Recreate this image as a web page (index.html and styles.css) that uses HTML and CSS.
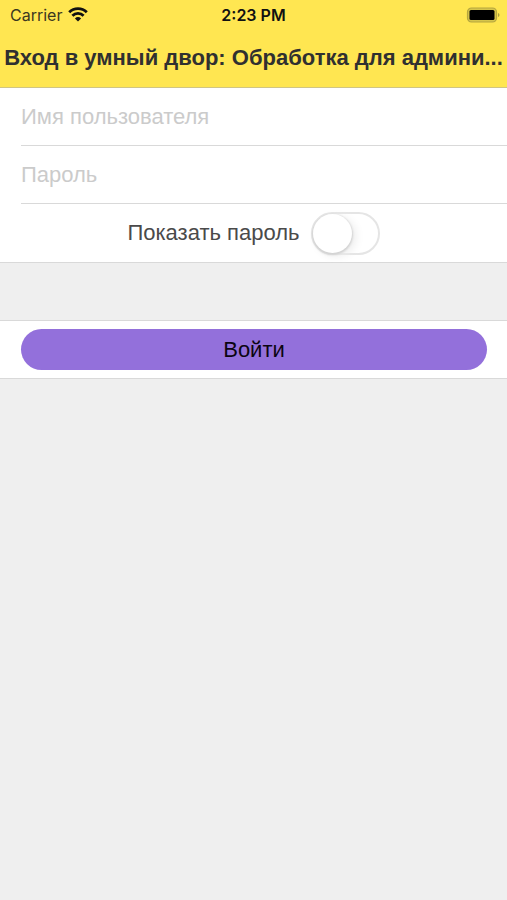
FILE: index.html
```html
<!DOCTYPE html>
<html lang="ru">
<head>
<meta charset="utf-8">
<meta name="viewport" content="width=device-width, initial-scale=1">
<title>Вход в умный двор</title>
<link rel="stylesheet" href="styles.css">
</head>
<body>
<header class="header">
  <div class="status">
    <div class="carrier">
      <span>Carrier</span>
      <svg class="wifi" viewBox="0 0 20 15" aria-hidden="true">
        <path d="M1.2 5.2a12.6 12.6 0 0 1 17.6 0M4.4 8.8a7.9 7.9 0 0 1 11.2 0" fill="none" stroke="#111" stroke-width="2.8"/>
        <path d="M10 14.6 6.9 11.5a4.5 4.5 0 0 1 6.2 0z" fill="#111"/>
      </svg>
    </div>
    <time class="time">2:23 PM</time>
    <svg class="battery" viewBox="0 0 34 16" aria-hidden="true">
      <rect x="1.5" y="1" width="29" height="14" rx="4" fill="#d6c54a" stroke="#b5a63f" stroke-width="1.2"/>
      <rect x="3.5" y="3" width="25" height="10" rx="1.5" fill="#000"/>
      <path d="M32 6v4q1.5-.6 1.5-2t-1.5-2z" fill="#aa9d3c"/>
    </svg>
  </div>
  <h1 class="title">Вход в умный двор: Обработка для админи...</h1>
</header>
<main>
  <form class="form">
    <div class="group">
      <div class="field"><input class="text" type="text" aria-label="Имя пользователя" placeholder="Имя пользователя"></div>
      <div class="field"><input class="text" type="password" aria-label="Пароль" placeholder="Пароль"></div>
      <div class="show">
        <label for="show">Показать пароль</label>
        <input class="toggle" id="show" type="checkbox">
      </div>
    </div>
    <div class="group action">
      <button class="submit" type="button">Войти</button>
    </div>
  </form>
</main>
</body>
</html>
```
FILE: styles.css
```css
* {
  box-sizing: border-box;
}

body {
  margin: 0;
  background: #efefef;
  color: #4a4a4a;
  font: 22px/28px "Liberation Sans", Arial, sans-serif;
}

.header {
  background: #ffe651;
  border-bottom: 1px solid #d0c584;
}

.status {
  display: grid;
  grid-template-columns: 1fr auto 1fr;
  align-items: center;
  height: 29px;
  padding: 0 7px;
  color: #111;
  font: 16px/20px Inter, sans-serif;
}

.carrier {
  display: flex;
  align-items: center;
  gap: 6px;
  padding-left: 3px;
  color: #3c381f;
}

.wifi {
  width: 20px;
  height: 15px;
}

.time {
  font-weight: 600;
}

.battery {
  justify-self: end;
  width: 34px;
  height: 16px;
}

.title {
  margin: 0;
  color: #303030;
  font-size: 22px;
  line-height: 58px;
  overflow: hidden;
  text-align: center;
  text-overflow: ellipsis;
  white-space: nowrap;
}

.form {
  display: grid;
  gap: 57px;
}

.group {
  background: #fff;
  border-bottom: 1px solid #d9d9d9;
}

.field {
  margin-left: 21px;
  border-bottom: 1px solid #d9d9d9;
}

.text {
  display: block;
  width: 100%;
  height: 57px;
  padding: 0;
  border: 0;
  outline: 0;
  background: none;
  color: #303030;
  font: inherit;
}

.text::placeholder {
  color: #cbcbcb;
  opacity: 1;
}

.show {
  display: flex;
  align-items: center;
  justify-content: center;
  gap: 11px;
  height: 58px;
}

.toggle {
  appearance: none;
  width: 69px;
  height: 43px;
  margin: 0;
  border: 2px solid #e5e5e5;
  border-radius: 22px;
  background: #fff;
}

.toggle::before {
  content: "";
  display: block;
  width: 39px;
  height: 39px;
  border-radius: 50%;
  background: #fff;
  box-shadow: 0 1px 2px 1px #d2d2d2, 4px 3px 10px #ececec;
}

.toggle:checked {
  background: #9370db;
}

.toggle:checked::before {
  margin-left: 26px;
}

.action {
  padding: 8px 20px 8px 21px;
  border-top: 1px solid #d9d9d9;
}

.submit {
  display: block;
  width: 100%;
  height: 41px;
  padding: 0;
  border: 0;
  border-radius: 21px;
  background: #9370db;
  color: #0c0512;
  font: inherit;
}
```
